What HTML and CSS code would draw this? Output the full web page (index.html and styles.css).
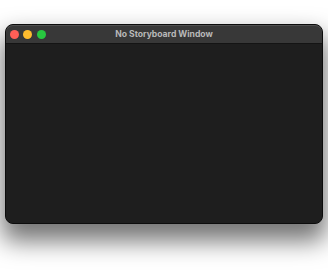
FILE: index.html
```html
<!DOCTYPE html>
<html lang="en">
<head>
  <meta charset="UTF-8" />
  <title>No Storyboard Window</title>
  <link rel="stylesheet" href="styles.css">
</head>
<body>
  <div class="window">
    <div class="titlebar">
      <div class="lights">
        <span class="light close"></span>
        <span class="light minimize"></span>
        <span class="light zoom"></span>
      </div>
      <div class="title">No Storyboard Window</div>
    </div>
    <div class="content"></div>
  </div>
</body>
</html>
```

FILE: styles.css
```css
* { box-sizing: border-box; }

html, body {
  margin: 0;
  height: 100%;
  background: #ffffff;
}

body {
  font-family: Inter, "Noto Sans", sans-serif;
  padding: 24px 5px 0 5px;
}

.window {
  width: 318px;
  height: 200px;
  border-radius: 8px;
  display: flex;
  flex-direction: column;
  background: #1e1e1e;
  border: 1px solid #0c0c0c;
  box-shadow: 0 14px 24px 3px rgba(0, 0, 0, 0.55);
}

.titlebar {
  position: relative;
  height: 19px;
  flex-shrink: 0;
  background: #383838;
  border-radius: 7px 7px 0 0;
  border-bottom: 1px solid #141414;
  display: flex;
  align-items: center;
  justify-content: center;
  box-shadow: inset 0 1px 0 rgba(255, 255, 255, 0.12);
}

.lights {
  position: absolute;
  left: 3.5px;
  top: 4.5px;
  display: flex;
  gap: 4.5px;
}

.light {
  width: 9px;
  height: 9px;
  border-radius: 50%;
}

.close { background: #fe5f57; }
.minimize { background: #febc2e; }
.zoom { background: #28c840; }

.title {
  color: #b8b8b8;
  font-size: 8.6px;
  font-weight: 700;
}

.content {
  flex: 1;
  border-radius: 0 0 7px 7px;
  background: #1e1e1e;
}
```
